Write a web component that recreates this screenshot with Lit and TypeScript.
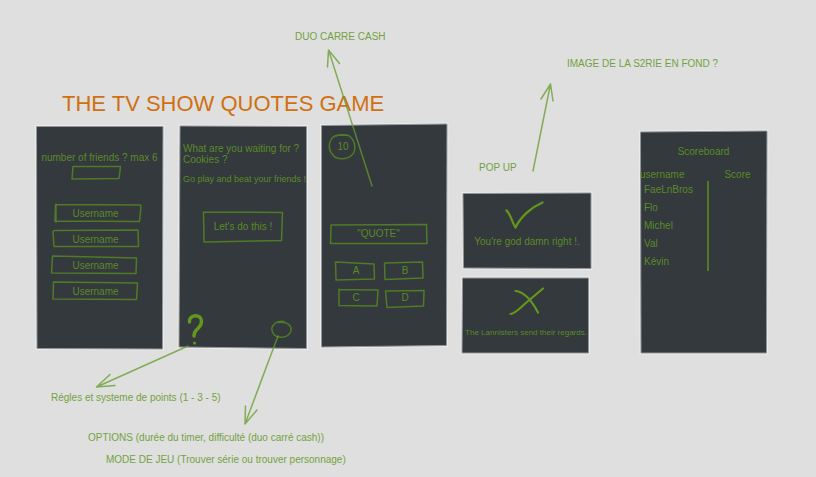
import { LitElement, html, svg, css } from "lit";
import { customElement } from "lit/decorators.js";

/** A hand-drawn shape behind its parent's content; paths use board coordinates. */
const sketch = (x: number, y: number, w: number, h: number, d: string, cls = "line") => html`
  <svg class="sketch" viewBox="${x} ${y} ${w} ${h}" aria-hidden="true">
    ${cls === "paper" ? svg`<path class="halo" d=${d}></path>` : ""}
    <path class=${cls} d=${d}></path>
  </svg>
`;

const players = [
  { id: "p1", y: 204, d: "M55.5 204.5L140.5 205L141 206L139.5 221.5L56 221L55 221.5ZM56 204L56 222" },
  { id: "p2", y: 230, d: "M54 230.5L138 230L138.5 246.500L54 246.500L53 231.500Z" },
  { id: "p3", y: 256, d: "M52.500 256L136.500 258L136 273.500L51.500 273L52.500 256Z" },
  { id: "p4", y: 282, d: "M53.500 282L137.500 283L136.500 299.500L53 299L53.500 282Z" },
];

const answers = [
  { label: "A", x: 336, y: 262, d: "M336 262L374 264L374.500 279L336 280L335.500 262Z" },
  { label: "B", x: 385, y: 262, d: "M384.500 263L422.500 262L423 278L385 279.500L384.500 263Z" },
  { label: "C", x: 336, y: 289, d: "M339 289.500L378 290L377 306L339 305.500L339 289Z" },
  { label: "D", x: 385, y: 289, d: "M386 291L424 290.500L423.500 306L387 307.500L385.500 291Z" },
];

const scores = ["FaeLnBros", "Flo", "Michel", "Val", "Kévin"];

@customElement("app-root")
export class AppRoot extends LitElement {
  static styles = css`
    :host {
      display: block;
      font: 10px/12px "Liberation Sans", Arial, sans-serif;
      color: #74a240;
      background: #dfdfdf;
    }
    * { box-sizing: border-box; }
    h1, h2, p { margin: 0; font: inherit; }
    .board {
      position: relative;
      width: 100%;
      min-height: 100vh;
      overflow: hidden;
    }
    .title, .note, .frame, .arrows { position: absolute; }
    .title {
      left: 62px;
      top: 92px;
      font-size: 22px;
      line-height: 24px;
      color: #d0700f;
      white-space: nowrap;
    }
    .note { white-space: nowrap; }
    .note-duo { left: 295px; top: 31px; }
    .note-image { left: 567px; top: 58px; }
    .note-popup { left: 479px; top: 162px; }
    .note-rules { left: 51px; top: 392px; }
    .note-options { left: 88px; top: 432px; }
    .note-mode { left: 106px; top: 454px; }
    .arrows {
      left: 0;
      top: 0;
      pointer-events: none;
    }
    .arrow {
      fill: none;
      stroke: #669b2a;
      stroke-opacity: 0.75;
      stroke-width: 1.5;
      stroke-linecap: round;
      stroke-linejoin: round;
    }
    .frame {
      display: flex;
      flex-direction: column;
      color: #5a8a28;
      white-space: nowrap;
    }
    .frame > *, .box > * { position: relative; }
    .frame > .sketch, .box > .sketch {
      position: absolute;
      inset: 0;
      width: 100%;
      height: 100%;
      overflow: visible;
      pointer-events: none;
    }
    .halo { fill: none; stroke: #ebebeb; stroke-width: 3; }
    .paper { fill: #34393d; stroke: #92959a; stroke-width: 1; }
    .line {
      fill: none;
      stroke: #4f7a26;
      stroke-width: 1.5;
      stroke-linejoin: round;
      stroke-linecap: round;
    }
    .mark {
      fill: none;
      stroke: #64981c;
      stroke-width: 2.2;
      stroke-linecap: round;
      stroke-linejoin: round;
    }
    .brush {
      fill: none;
      stroke: #64981c;
      stroke-width: 3.4;
      stroke-linecap: round;
      stroke-linejoin: round;
    }
    .dot { fill: #64981c; }
    .box {
      position: relative;
      display: grid;
      place-items: center;
      margin: 0;
      padding: 0;
      border: 0;
      background: none;
      font: inherit;
      color: inherit;
    }
    .field {
      width: 100%;
      height: 100%;
      padding: 0;
      border: 0;
      background: none;
      font: inherit;
      color: inherit;
      text-align: center;
      outline: none;
    }
    .field::placeholder { color: inherit; opacity: 1; }

    .players { left: 36px; top: 126px; width: 127px; height: 223px; padding-top: 26px; align-items: center; }
    .form { display: flex; flex-direction: column; align-items: center; padding-right: 8px; }
    .count { width: 48px; height: 12px; margin: 3px 0 25px; }
    .names { display: grid; gap: 8px; }
    .name { width: 86px; height: 18px; }

    .welcome { left: 179px; top: 126px; width: 128px; height: 222px; padding: 17px 4px 3px; line-height: 11px; }
    .tagline { margin: 9px 0 27px; font-size: 9px; }
    .start { width: 79px; height: 29px; align-self: center; }
    .tools { display: flex; align-items: center; justify-content: space-between; margin-top: auto; padding: 0 11px 0 4px; }
    .help { width: 17px; height: 31px; }
    .options { width: 20px; height: 17px; }

    .question { left: 321px; top: 124px; width: 126px; height: 223px; padding: 10px 9px; }
    .timer { width: 26px; height: 26px; }
    .quote { width: 97px; height: 20px; margin: 64px 0 18px; }
    .answers { display: grid; grid-template-columns: 40px 40px; gap: 9px; padding-left: 6px; }
    .answer { height: 18px; }

    .popup { align-items: center; width: 128px; height: 76px; padding-top: 9px; gap: 8px; }
    .right { left: 463px; top: 193px; }
    .wrong { left: 462px; top: 278px; font-size: 8px; gap: 14px; }
    .symbol { width: 38px; height: 26px; }

    .scoreboard { left: 640px; top: 131px; width: 127px; height: 222px; padding-top: 15px; gap: 11px; }
    .scoreboard-title { text-align: center; }
    .scores { width: 100%; border-collapse: collapse; table-layout: fixed; }
    .scores th { padding: 0; height: 12px; font-weight: normal; text-align: center; }
    .scores .who { width: 68px; text-align: left; }
    .scores td { padding: 0; height: 18px; }
    .scores .name-cell { padding-left: 4px; border-right: 2px solid #4f7a26; }
  `;

  render() {
    return html`
      <main class="board">
        <h1 class="title">THE TV SHOW QUOTES GAME</h1>

        <section class="frame players">
          ${sketch(36, 126, 127, 223, "M36.500 126.500L163 126.500L162.500 349L37 348.500Z", "paper")}
          <label for="count">number of friends ? max 6</label>
          <div class="form">
            <div class="box count">
              ${sketch(72, 167, 48, 12, "M73 166.500L120.500 166.500L119 178.500L72 179Z")}
              <input class="field" id="count" type="text" inputmode="numeric" />
            </div>
            <div class="names">
              ${players.map(
                (p) => html`<div class="box name">
                  ${sketch(53, p.y, 86, 18, p.d)}
                  <input class="field" id=${p.id} type="text" placeholder="Username" aria-label="Username" />
                </div>`
              )}
            </div>
          </div>
        </section>

        <section class="frame welcome">
          ${sketch(179, 126, 128, 222, "M180 126L306.500 126.500L306.500 348.500L179 347Z", "paper")}
          <p>What are you waiting for ?<br />Cookies ?</p>
          <p class="tagline">Go play and beat your friends !</p>
          <button class="box start" type="button">
            ${sketch(203, 212, 79, 29, "M202.500 212L281.500 212.500L280.500 240.500L203 242L202.500 212")}
            <span>Let's do this !</span>
          </button>
          <div class="tools">
            <button class="box help" type="button" aria-label="Help">
              <svg class="sketch" viewBox="187 314 17 31" aria-hidden="true">
                <path class="brush" d="M189.500 322C188.500 314.500 201.500 313 201.500 321.500C201.500 329 193.500 328.500 194 336"></path>
                <circle class="dot" cx="194.500" cy="343" r="1.500"></circle>
              </svg>
            </button>
            <button class="box options" type="button" aria-label="Options">
              ${sketch(272, 323, 20, 17, "M284 323.500C276 322 270 328 272.500 334C275 341 287 341 290.500 334C293 328 287 323 278 324.500")}
            </button>
          </div>
        </section>

        <section class="frame question">
          ${sketch(321, 124, 126, 223, "M321.500 125.500L447 124L446.500 345.500L321.500 347Z", "paper")}
          <div class="box timer">
            ${sketch(330, 134, 26, 26, "M336 136C340 134 348 134.500 350 136.500C355 141 357 150 352 155C347 160 336 160 333 155C327 149 328 136 339 135L349 135.500")}
            <span>10</span>
          </div>
          <div class="box quote">
            ${sketch(330, 224, 97, 20, "M331 225L426.500 224.500L427 243.500L330.500 243.500L331 225")}
            <span>"QUOTE"</span>
          </div>
          <div class="answers">
            ${answers.map(
              (a) => html`<button class="box answer" type="button">
                ${sketch(a.x, a.y, 40, 18, a.d)}
                <span>${a.label}</span>
              </button>`
            )}
          </div>
        </section>

        <section class="frame popup right">
          ${sketch(463, 193, 128, 76, "M463 193.500L591 193L591 268.500L463.500 268Z", "paper")}
          <div class="box symbol">
            ${sketch(508, 202, 38, 26, "M506.500 210.500C510 213 512 222 515.500 227.500C521 216 532 207 542.500 202.500", "mark")}
          </div>
          <p>You're god damn right !.</p>
        </section>

        <section class="frame popup wrong">
          ${sketch(462, 278, 128, 76, "M462.500 278L588.500 278L588.500 353L462 353Z", "paper")}
          <div class="box symbol">
            ${sketch(507, 287, 38, 26, "M515.500 291C526 292 533 303 538 312.500M543 288.500L527 302C522 306 515 314 510.500 314", "mark")}
          </div>
          <p>The Lannisters send their regards.</p>
        </section>

        <section class="frame scoreboard">
          ${sketch(640, 131, 127, 222, "M640.500 132L767 131L766.500 353L641 353Z", "paper")}
          <h2 class="scoreboard-title">Scoreboard</h2>
          <table class="scores">
            <thead>
              <tr><th class="who" scope="col">username</th><th scope="col">Score</th></tr>
            </thead>
            <tbody>
              ${scores.map((s) => html`<tr><td class="name-cell">${s}</td><td></td></tr>`)}
            </tbody>
          </table>
        </section>

        <p class="note note-duo">DUO CARRE CASH</p>
        <p class="note note-image">IMAGE DE LA S2RIE EN FOND ?</p>
        <p class="note note-popup">POP UP</p>
        <p class="note note-rules">Régles et systeme de points (1 - 3 - 5)</p>
        <p class="note note-options">OPTIONS (durée du timer, difficulté (duo carré cash))</p>
        <p class="note note-mode">MODE DE JEU (Trouver série ou trouver personnage)</p>

        <svg class="arrows" width="816" height="477" aria-hidden="true">
          ${[
            "M372 186L328.500 50M327.500 67L328.500 50L339.500 63.500",
            "M533 171L550.500 84M541 99L550.500 84L553 101",
            "M188 346L96.500 387M110 374.500L96.500 387L115 385.500",
            "M278 336L245 424M245.500 406L245 424L257 410",
          ].map((d) => svg`<path class="arrow" d=${d}></path>`)}
        </svg>
      </main>
    `;
  }
}
